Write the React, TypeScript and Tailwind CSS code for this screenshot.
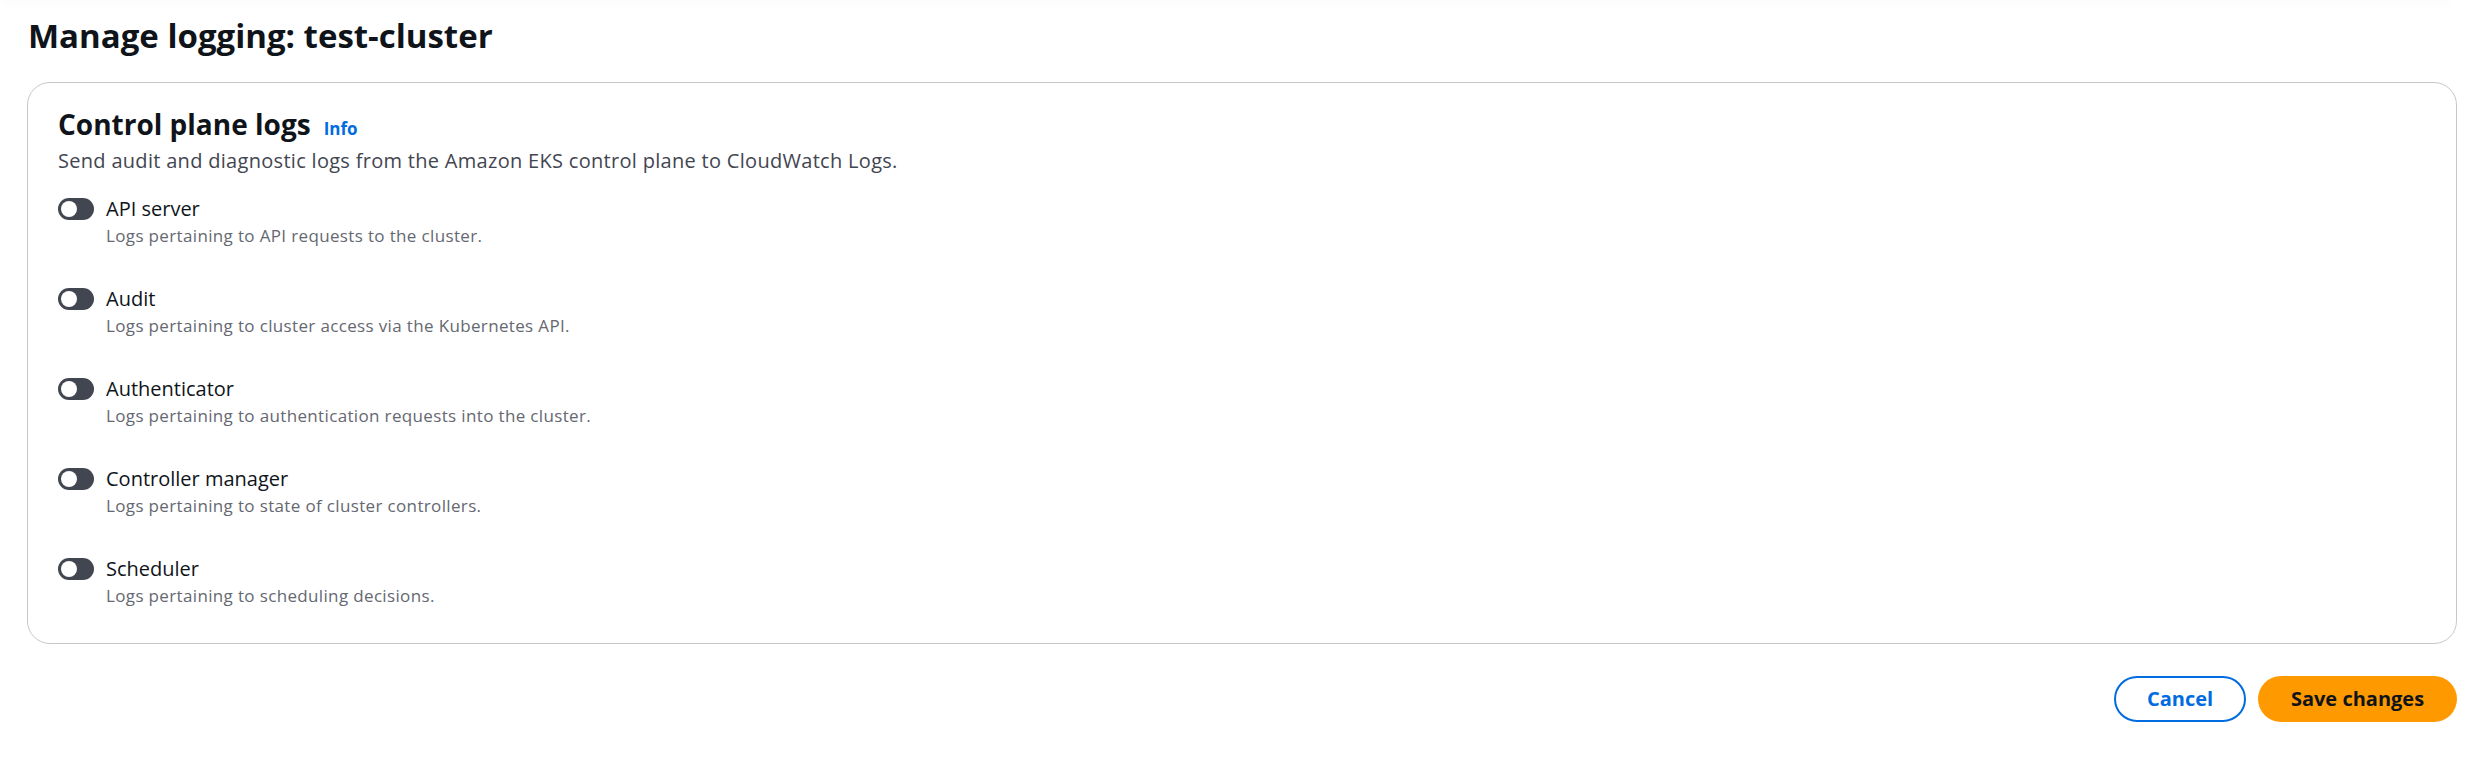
import React from "react";

const rows = [
  { label: "API server", desc: "Logs pertaining to API requests to the cluster." },
  { label: "Audit", desc: "Logs pertaining to cluster access via the Kubernetes API." },
  { label: "Authenticator", desc: "Logs pertaining to authentication requests into the cluster." },
  { label: "Controller manager", desc: "Logs pertaining to state of cluster controllers." },
  { label: "Scheduler", desc: "Logs pertaining to scheduling decisions." },
];

function Toggle() {
  return (
    <div className="mt-[3px] flex h-[22px] w-[36px] shrink-0 items-center rounded-full bg-[#424650] pl-[3px]">
      <div className="h-[16px] w-[16px] rounded-full bg-white" />
    </div>
  );
}

export default function App() {
  return (
    <div className="min-h-screen w-full bg-white font-['Open_Sans',sans-serif] text-[#0f141a]">
      <div className="mr-[40px] h-px -mt-px shadow-[0_2px_8px_rgba(0,0,0,0.12)]" />
      <div className="pl-[27px] pr-[33px] pt-[16px]">
        <h1 className="pl-px text-[33px] font-bold leading-[40px]">
          Manage logging: test-cluster
        </h1>
        <div className="mt-[26px] rounded-[23px] border border-[#c6c6cd] pb-[35px] pl-[30px] pr-[30px] pt-[25px]">
          <div className="flex items-baseline">
            <h2 className="text-[28px] font-bold leading-[33px]">Control plane logs</h2>
            <span className="ml-[13px] text-[17px] font-bold text-[#006ce0]">Info</span>
          </div>
          <p className="mt-[5px] text-[20px] leading-[28px] tracking-[0.3px] text-[#424650]">
            Send audit and diagnostic logs from the Amazon EKS control plane to CloudWatch Logs.
          </p>
          <div className="mt-[20px] flex flex-col gap-[37px]">
            {rows.map((r) => (
              <div key={r.label} className="flex items-start gap-[12px]">
                <Toggle />
                <div className="flex flex-col gap-px">
                  <span className="text-[20px] leading-[28px] text-[#0f141a]">{r.label}</span>
                  <span className="text-[17px] leading-[24px] tracking-[0.35px] text-[#656871]">{r.desc}</span>
                </div>
              </div>
            ))}
          </div>
        </div>
        <div className="mt-[32px] flex justify-end gap-[12px]">
          <button className="flex h-[46px] w-[132px] items-center justify-center rounded-full border-[2.5px] border-[#006ce0] bg-white text-[20px] font-bold text-[#006ce0]">
            Cancel
          </button>
          <button className="flex h-[46px] w-[199px] items-center justify-center rounded-full bg-[#ff9900] text-[20px] font-bold text-[#0f141a]">
            Save changes
          </button>
        </div>
      </div>
    </div>
  );
}
